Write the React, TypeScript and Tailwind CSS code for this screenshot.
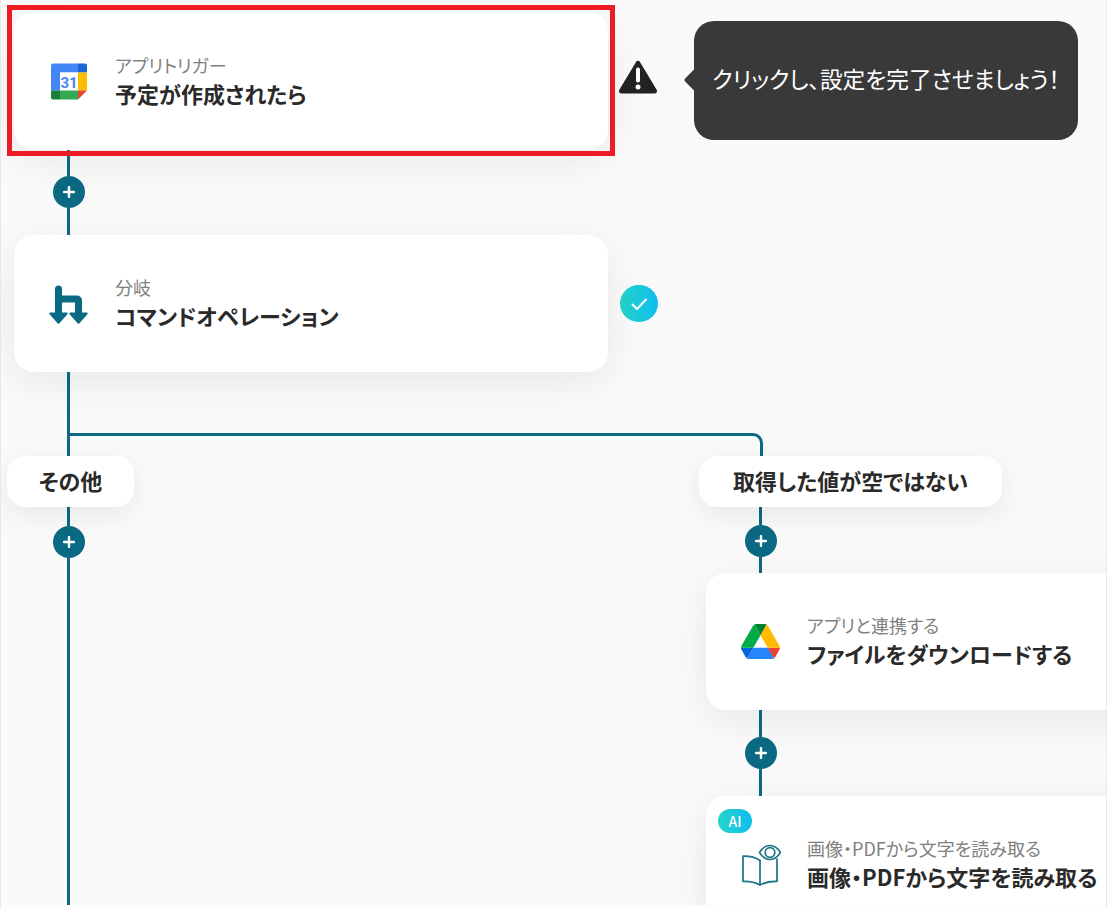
const font = { fontFamily: '"Noto Sans CJK JP", "Noto Sans", sans-serif' };

function Plus() {
  return (
    <div className="flex h-8 w-8 shrink-0 items-center justify-center rounded-full bg-[#0b6a83]">
      <svg width="12" height="12" viewBox="0 0 12 12">
        <path d="M6 1v10M1 6h10" stroke="#fff" strokeWidth="2.4" strokeLinecap="round" />
      </svg>
    </div>
  );
}

function Card({ className, sub, title, icon }: { className: string; sub: string; title: string; icon: React.ReactNode }) {
  return (
    <div className={`relative flex shrink-0 items-center rounded-[20px] bg-white shadow-[0_10px_40px_rgba(0,0,0,0.08)] ${className}`}>
      <div className="flex w-[101px] shrink-0 justify-center pl-[8px]">{icon}</div>
      <div className="flex flex-col whitespace-nowrap">
        <span className="text-[18px] leading-[22px] text-[#808080]">{sub}</span>
        <span className="mt-[1px] text-[22px] leading-[32px] font-bold text-[#2a2a2a]">{title}</span>
      </div>
    </div>
  );
}

function Pill({ className, text }: { className: string; text: string }) {
  return (
    <div className={`relative flex h-[51px] shrink-0 items-center justify-center rounded-[18px] bg-white pb-[3px] text-[22px] font-bold text-[#2a2a2a] shadow-[0_8px_30px_rgba(0,0,0,0.08)] ${className}`}>
      {text}
    </div>
  );
}

function CalendarIcon() {
  return (
    <svg width="36" height="37" viewBox="0 0 36 36">
      <path d="M2 0h25v9H9v18H0V2a2 2 0 0 1 2-2z" fill="#4285f4" />
      <path d="M27 0h7a2 2 0 0 1 2 2v7h-9z" fill="#1967d2" />
      <rect x="27" y="9" width="9" height="18" fill="#fbbc04" />
      <rect x="9" y="9" width="18" height="18" fill="#fff" />
      <rect x="9" y="27" width="18" height="9" fill="#34a853" />
      <path d="M0 27h9v9H2a2 2 0 0 1-2-2z" fill="#188038" />
      <path d="M27 27h9l-9 9z" fill="#ea4335" />
      <text x="18" y="24.5" textAnchor="middle" fontSize="15" fontWeight="700" fill="#4285f4" style={{ fontFamily: '"Roboto", sans-serif' }}>31</text>
    </svg>
  );
}

function BranchIcon() {
  return (
    <svg width="40" height="42" viewBox="0 0 40 42">
      <path d="M9.500 6v24M9.500 16h18.500a1.500 1.500 0 0 1 1.500 1.500V30" fill="none" stroke="#0b6a83" strokeWidth="7" strokeLinecap="round" />
      <path d="M1.300 29.500h16.400a1 1 0 0 1 .7 1.700l-8.200 9.300a1 1 0 0 1-1.400 0l-8.200-9.300a1 1 0 0 1 .7-1.700z" fill="#0b6a83" />
      <path d="M21.300 29.500h16.400a1 1 0 0 1 .7 1.700l-8.200 9.300a1 1 0 0 1-1.400 0l-8.200-9.300a1 1 0 0 1 .7-1.700z" fill="#0b6a83" />
    </svg>
  );
}

function DriveIcon() {
  return (
    <svg width="39" height="35" viewBox="0 0 87.300 78">
      <path d="m6.600 66.850 3.850 6.650c.8 1.400 1.950 2.500 3.300 3.300l13.750-23.800h-27.500c0 1.550.4 3.100 1.200 4.500z" fill="#0066da" />
      <path d="m43.650 25-13.750-23.800c-1.350.8-2.500 1.900-3.300 3.300l-25.400 44a9.060 9.060 0 0 0-1.200 4.500h27.500z" fill="#00ac47" />
      <path d="m73.550 76.800c1.350-.8 2.500-1.900 3.300-3.300l1.600-2.750 7.650-13.250c.8-1.400 1.200-2.950 1.200-4.500h-27.502l5.852 11.500z" fill="#ea4335" />
      <path d="m43.650 25 13.750-23.800c-1.350-.8-2.900-1.200-4.500-1.200h-18.500c-1.600 0-3.150.45-4.500 1.200z" fill="#00832d" />
      <path d="m59.800 53h-32.300l-13.750 23.800c1.350.8 2.900 1.200 4.500 1.200h50.800c1.600 0 3.150-.45 4.500-1.200z" fill="#2684fc" />
      <path d="m73.400 26.500-12.700-22c-.8-1.400-1.950-2.500-3.300-3.300l-13.750 23.800 16.150 28h27.450c0-1.550-.4-3.100-1.200-4.500z" fill="#ffba00" />
    </svg>
  );
}

function BookIcon() {
  return (
    <svg width="40" height="44" viewBox="0 0 40 44" fill="none" stroke="#1d7388" strokeWidth="1.700" strokeLinejoin="round" strokeLinecap="round">
      <path d="M19 17.500C14.500 14.500 8 13 2 13.200v25.300c6-.2 12.500 1 17 3.500 4.500-2.500 11-3.700 17-3.500V16" />
      <path d="M19 17.500V42" />
      <path d="M18.500 9.500C21 5.500 25 2.500 29 2.500s8 3 10.500 7c-2.500 4-6.500 7-10.500 7s-8-3-10.500-7z" fill="#fff" />
      <circle cx="29" cy="9.500" r="4.800" />
    </svg>
  );
}

function Stem({ className }: { className: string }) {
  return <div className={`ml-[14px] w-[3px] bg-[#0b6a83] ${className}`} />;
}

export default function App() {
  return (
    <div className="flex h-[908px] w-[1107px] flex-col overflow-hidden border-x border-[#e8e8e8] bg-[#fafafa] [font-feature-settings:'palt']" style={font}>
      {/* first step row */}
      <div className="mt-[12px] flex shrink-0 items-center pl-[13px]">
        <Card className="h-[138px] w-[594px]" sub="アプリトリガー" title="予定が作成されたら" icon={<CalendarIcon />} />
        <svg className="relative z-10 mb-[7px] ml-[11px]" width="38" height="35" viewBox="0 0 38 35">
          <path d="M19 3.500 35.500 31H2.500z" fill="#222" stroke="#222" strokeWidth="5" strokeLinejoin="round" />
          <path d="M19 9.500v11" stroke="#fff" strokeWidth="4" strokeLinecap="round" />
          <circle cx="19" cy="27" r="2.500" fill="#fff" />
        </svg>
        <div className="relative mb-px ml-[37px] flex h-[119px] w-[384px] shrink-0 items-center justify-center rounded-[20px] bg-[#393939] pb-[2px] text-[22.700px] whitespace-nowrap text-white">
          <div className="absolute top-[51px] left-[-7px] h-[16px] w-[16px] rotate-45 rounded-[2px] bg-[#393939]" />
          <span className="relative">クリックし、設定を完了させましょう！</span>
        </div>
      </div>
      <div className="absolute top-[5px] left-[7px] h-[151px] w-[608px] border-[5px] border-[#ed1c24]" />

      {/* connector */}
      <div className="ml-[52px] flex h-[85px] w-8 shrink-0 flex-col">
        <Stem className="h-[26px]" />
        <Plus />
        <Stem className="h-[27px]" />
      </div>

      {/* branch step row */}
      <div className="flex shrink-0 items-center pl-[13px]">
        <Card className="h-[137px] w-[594px]" sub="分岐" title="コマンドオペレーション" icon={<BranchIcon />} />
        <div className="ml-[12px] flex h-[37px] w-[38px] items-center justify-center rounded-full bg-gradient-to-r from-[#25d4c8] to-[#10bdee]">
          <svg width="20" height="20" viewBox="0 0 20 20" fill="none">
            <path d="M3.500 10.500l4.500 4.500 9-9.500" stroke="#fff" strokeWidth="2" strokeLinecap="round" strokeLinejoin="round" />
          </svg>
        </div>
      </div>

      {/* branches */}
      <div className="flex h-[533px] shrink-0 overflow-hidden">
        {/* other branch */}
        <div className="flex w-[698px] shrink-0 flex-col">
          <div className="ml-[52px] h-[84px] shrink-0">
            <Stem className="h-full" />
          </div>
          <Pill className="ml-[6px] w-[127px]" text="その他" />
          <div className="ml-[52px] flex w-8 flex-1 flex-col">
            <Stem className="h-[19px]" />
            <Plus />
            <Stem className="flex-1" />
          </div>
        </div>
        {/* matched branch */}
        <div className="flex flex-1 flex-col">
          <div className="h-[61px] shrink-0" />
          <div className="ml-[-631px] h-[23px] w-[695px] shrink-0 rounded-tr-[10px] border-t-[3px] border-r-[3px] border-[#0b6a83]" />
          <Pill className="w-[303px]" text="取得した値が空ではない" />
          <div className="ml-[46px] flex w-8 shrink-0 flex-col">
            <Stem className="h-[18px]" />
            <Plus />
            <Stem className="h-[16px]" />
          </div>
          <Card className="ml-[7px] h-[137px] w-[500px]" sub="アプリと連携する" title="ファイルをダウンロードする" icon={<DriveIcon />} />
          <div className="ml-[46px] flex w-8 shrink-0 flex-col">
            <Stem className="h-[27px]" />
            <Plus />
            <Stem className="h-[27px]" />
          </div>
          <Card className="ml-[7px] h-[137px] w-[500px]" sub="画像・PDFから文字を読み取る" title="画像・PDFから文字を読み取る" icon={<BookIcon />} />
        </div>
      </div>
      <div className="absolute top-[809px] left-[718px] flex h-[24px] w-[34px] items-center justify-center rounded-full bg-gradient-to-r from-[#25d4c8] to-[#10bdee] text-[14px] font-medium text-white">AI</div>
      <div className="flex-1 bg-[#fdfdfd]" />
    </div>
  );
}
